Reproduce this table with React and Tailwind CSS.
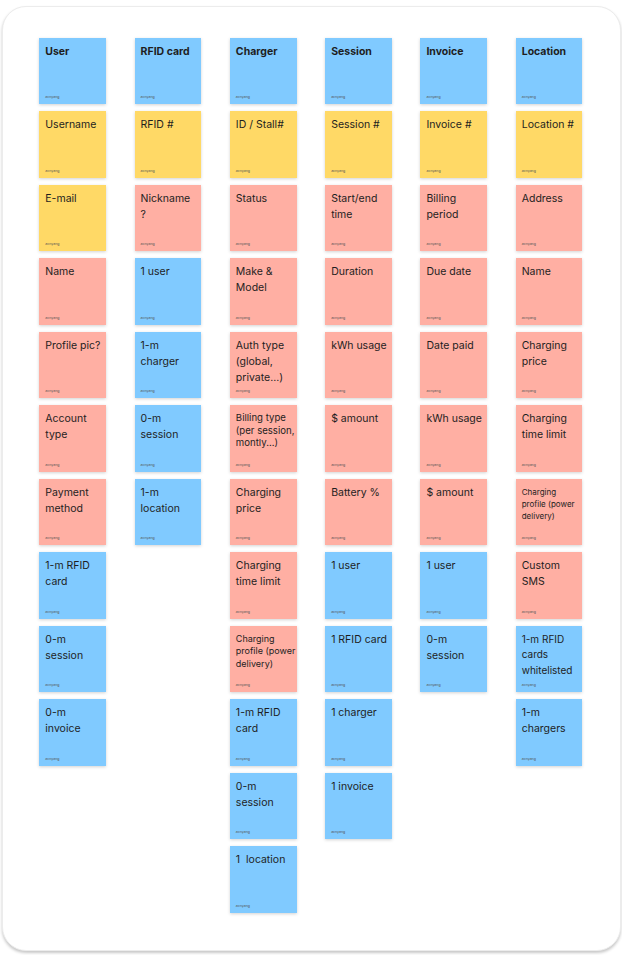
const BLUE = 'bg-[#80caff]';
const YELLOW = 'bg-[#ffd966]';
const PINK = 'bg-[#ffafa3]';

// size keys: m = regular, t = tighter, s = small, xs = smallest
const SIZES = {
  m: 'text-[10.5px] leading-[16px] pt-[1px]',
  t: 'text-[10px] leading-[15.5px] pt-[1px]',
  b: 'text-[9.6px] leading-[12.5px] pt-[2px]',
  s: 'text-[9px] leading-[12.5px] pt-[2px]',
  xs: 'text-[8px] leading-[12px] pt-[2px]',
};

const columns = [
  [
    { t: ['User'], c: BLUE, h: true },
    { t: ['Username'], c: YELLOW },
    { t: ['E-mail'], c: YELLOW },
    { t: ['Name'], c: PINK },
    { t: ['Profile pic?'], c: PINK },
    { t: ['Account', 'type'], c: PINK },
    { t: ['Payment', 'method'], c: PINK },
    { t: ['1-m RFID', 'card'], c: BLUE },
    { t: ['0-m', 'session'], c: BLUE },
    { t: ['0-m', 'invoice'], c: BLUE },
  ],
  [
    { t: ['RFID card'], c: BLUE, h: true },
    { t: ['RFID #'], c: YELLOW },
    { t: ['Nickname', '?'], c: PINK },
    { t: ['1 user'], c: BLUE },
    { t: ['1-m', 'charger'], c: BLUE },
    { t: ['0-m', 'session'], c: BLUE },
    { t: ['1-m', 'location'], c: BLUE },
  ],
  [
    { t: ['Charger'], c: BLUE, h: true },
    { t: ['ID / Stall#'], c: YELLOW },
    { t: ['Status'], c: PINK },
    { t: ['Make &', 'Model'], c: PINK },
    { t: ['Auth type', '(global,', 'private...)'], c: PINK },
    { t: ['Billing type', '(per session,', 'montly...)'], c: PINK, z: 'b' },
    { t: ['Charging', 'price'], c: PINK },
    { t: ['Charging', 'time limit'], c: PINK },
    { t: ['Charging', 'profile (power', 'delivery)'], c: PINK, z: 's' },
    { t: ['1-m RFID', 'card'], c: BLUE },
    { t: ['0-m', 'session'], c: BLUE },
    { t: ['1\u00a0 location'], c: BLUE },
  ],
  [
    { t: ['Session'], c: BLUE, h: true },
    { t: ['Session #'], c: YELLOW },
    { t: ['Start/end', 'time'], c: PINK },
    { t: ['Duration'], c: PINK },
    { t: ['kWh usage'], c: PINK },
    { t: ['$ amount'], c: PINK },
    { t: ['Battery %'], c: PINK },
    { t: ['1 user'], c: BLUE },
    { t: ['1 RFID card'], c: BLUE },
    { t: ['1 charger'], c: BLUE },
    { t: ['1 invoice'], c: BLUE },
  ],
  [
    { t: ['Invoice'], c: BLUE, h: true },
    { t: ['Invoice #'], c: YELLOW },
    { t: ['Billing', 'period'], c: PINK },
    { t: ['Due date'], c: PINK },
    { t: ['Date paid'], c: PINK },
    { t: ['kWh usage'], c: PINK },
    { t: ['$ amount'], c: PINK },
    { t: ['1 user'], c: BLUE },
    { t: ['0-m', 'session'], c: BLUE },
  ],
  [
    { t: ['Location'], c: BLUE, h: true },
    { t: ['Location #'], c: YELLOW },
    { t: ['Address'], c: PINK },
    { t: ['Name'], c: PINK },
    { t: ['Charging', 'price'], c: PINK },
    { t: ['Charging', 'time limit'], c: PINK },
    { t: ['Charging', 'profile (power', 'delivery)'], c: PINK, z: 'xs' },
    { t: ['Custom', 'SMS'], c: PINK },
    { t: ['1-m RFID', 'cards', 'whitelisted'], c: BLUE, z: 't' },
    { t: ['1-m', 'chargers'], c: BLUE },
  ],
];

const Sticky = ({ note }) => (
  <div
    className={`w-[66.7px] h-[66.7px] flex flex-col justify-between px-[6px] pt-[5px] pb-[5px] shadow-[0_1px_3px_rgba(0,0,0,0.18)] ${note.c}`}
  >
    <div
      className={`whitespace-nowrap text-[#1e1e1e] ${SIZES[note.z || 'm']} ${
        note.h ? 'font-bold' : 'font-normal'
      }`}
    >
      {note.t.map((line, i) => (
        <div key={i}>{line}</div>
      ))}
    </div>
    <div className="text-[3.5px] leading-[4px] text-[#555]">acnyang</div>
  </div>
);

export default function App() {
  return (
    <div className="w-[622px] h-[955px] bg-white pt-[6px] px-[1.5px] font-['Inter','Liberation_Sans',sans-serif]">
      {/* board */}
      <div className="w-[619px] h-[945px] rounded-[24px] bg-white border border-[#ececec] shadow-[0_2px_3px_rgba(0,0,0,0.22)] pl-[36.8px] pt-[30.7px]">
        <div className="flex gap-x-[28.6px] items-start">
          {columns.map((col, ci) => (
            <div key={ci} className="flex flex-col gap-y-[6.8px]">
              {col.map((note, ni) => (
                <Sticky key={ni} note={note} />
              ))}
            </div>
          ))}
        </div>
      </div>
    </div>
  );
}
